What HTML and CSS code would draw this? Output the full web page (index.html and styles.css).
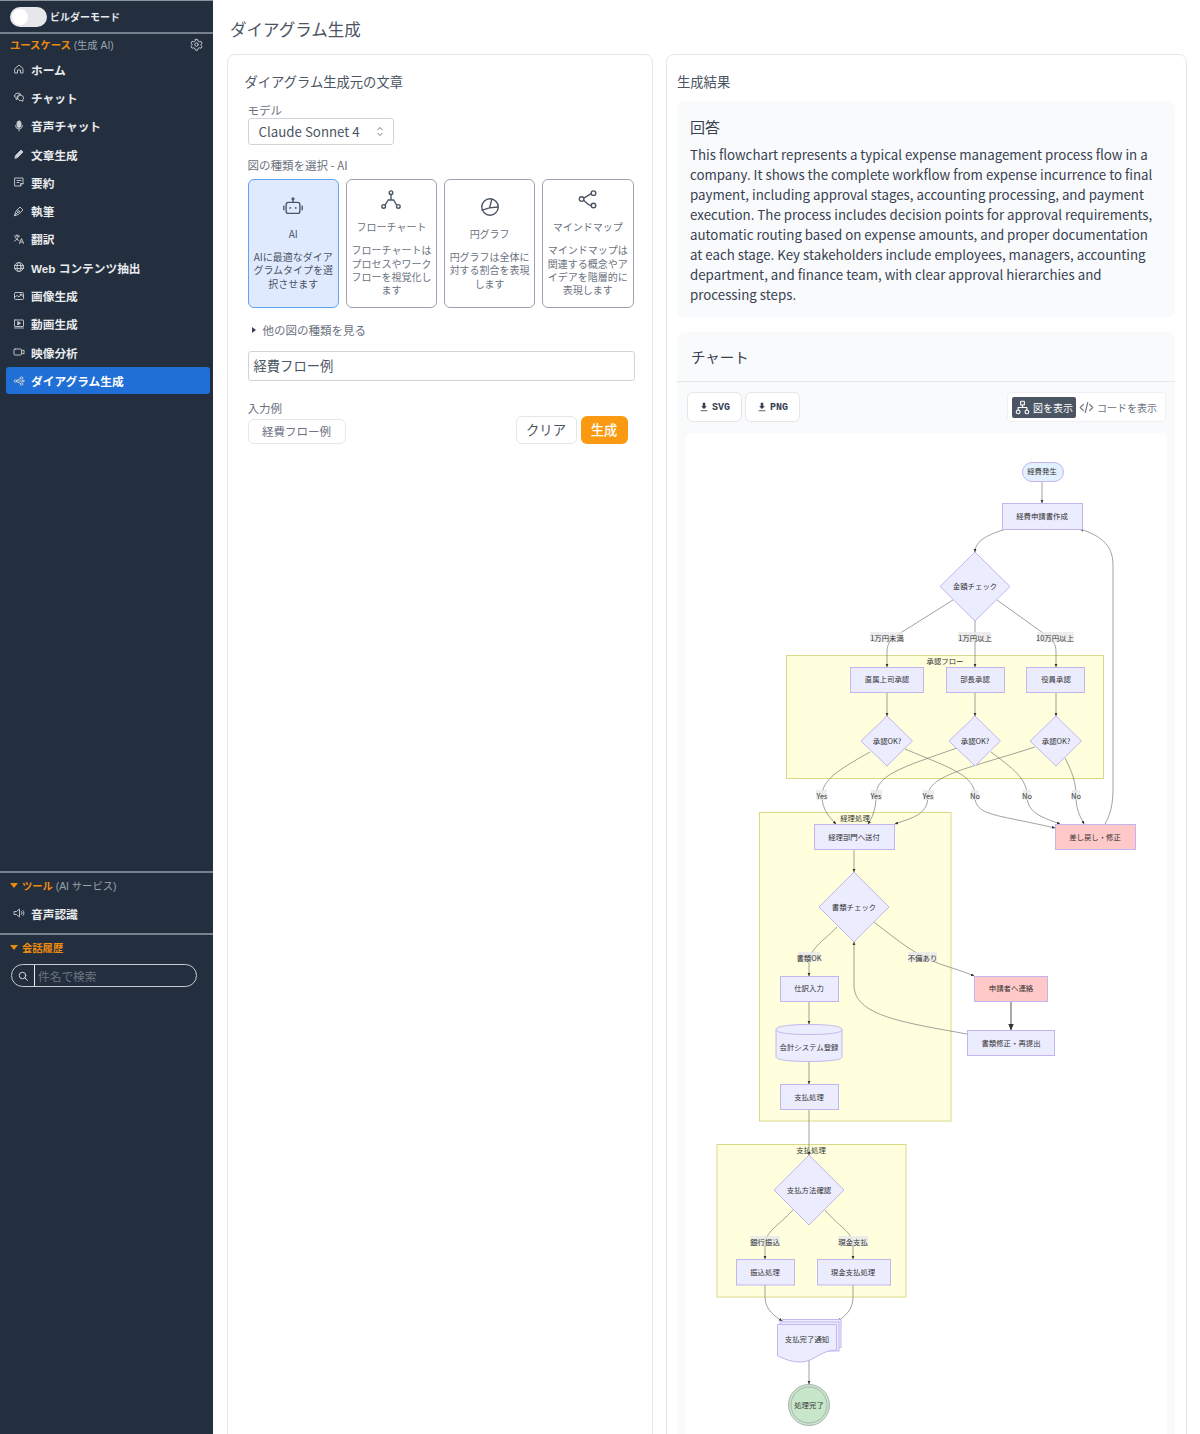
FILE: index.html
```html
<!DOCTYPE html>
<html lang="ja">
<head>
<meta charset="utf-8">
<title>ダイアグラム生成</title>
<link rel="stylesheet" href="styles.css">
</head>
<body>
<div class="app">
  <aside class="sidebar">
    <div class="builder">
      <span class="toggle"><span class="knob"></span></span>
      <span>ビルダーモード</span>
    </div>
    <div class="section-head">
      <span><b class="accent">ユースケース</b> <span class="muted">(生成 AI)</span></span>
      <svg class="gear" viewBox="0 0 24 24"><circle cx="12" cy="12" r="3.2"/><path d="M10 2.5h4l.7 3 2.6 1.5 3-.9 2 3.4-2.2 2.2v1.6l2.2 2.2-2 3.4-3-.9-2.6 1.5-.7 3h-4l-.7-3-2.6-1.5-3 .9-2-3.4 2.2-2.2v-1.6L1.700 9.500l2-3.400 3 .9L9.300 5.500z"/></svg>
    </div>
    <nav class="nav">
      <a class="nav-item"><svg viewBox="0 0 24 24"><path d="M4 11l8-7 8 7v9h-5v-6H9v6H4z"/></svg>ホーム</a>
      <a class="nav-item"><svg viewBox="0 0 24 24"><path d="M3 10a7 6 0 0 1 13-3 7 6 0 0 0-7 9l-3 1 .5-3A6 6 0 0 1 3 10z"/><path d="M9 14a6 5.500 0 0 1 12 0 5 5 0 0 1-1.500 3.500l.5 3-3.500-1.500A6 5.500 0 0 1 9 14z"/></svg>チャット</a>
      <a class="nav-item"><svg viewBox="0 0 24 24"><rect class="fill" x="8" y="2" width="8" height="13" rx="4"/><path d="M5 11a7 7 0 0 0 14 0M12 18v4"/></svg>音声チャット</a>
      <a class="nav-item"><svg viewBox="0 0 24 24"><path class="fill" d="M4 20l1-5L16 4l4 4L9 19z"/></svg>文章生成</a>
      <a class="nav-item"><svg viewBox="0 0 24 24"><path d="M4 4h16v11l-5 5H4z"/><path d="M15 20v-5h5M8 9h8M8 13h4"/></svg>要約</a>
      <a class="nav-item"><svg viewBox="0 0 24 24"><path d="M3 21l3-9 8-8 6 6-8 8z"/><circle cx="11" cy="13" r="2"/><path d="M3 21l6.500-6.500"/></svg>執筆</a>
      <a class="nav-item"><svg viewBox="0 0 24 24"><path d="M3 6h10M8 3v3M11 6c-1 5-4 8-8 10M5 9c1 3 4 5 7 6M13 21l4-10 4 10M14.500 18h5"/></svg>翻訳</a>
      <a class="nav-item"><svg viewBox="0 0 24 24"><circle cx="12" cy="12" r="9"/><ellipse cx="12" cy="12" rx="4" ry="9"/><path d="M3 9h18M3 15h18"/></svg>Web コンテンツ抽出</a>
      <a class="nav-item"><svg viewBox="0 0 24 24"><rect x="3" y="5" width="18" height="14" rx="2"/><path d="M3 15l5-4 4 3 4-5 5 5"/><circle cx="16" cy="9" r="1.500"/></svg>画像生成</a>
      <a class="nav-item"><svg viewBox="0 0 24 24"><rect x="3" y="4" width="18" height="13" rx="1"/><path class="fill" d="M10 7.500l5 3-5 3z"/><path d="M3 20h18"/></svg>動画生成</a>
      <a class="nav-item"><svg viewBox="0 0 24 24"><rect x="2" y="6" width="15" height="12" rx="2"/><path d="M17 10l5-2v8l-5-2"/></svg>映像分析</a>
      <a class="nav-item active"><svg viewBox="0 0 24 24"><circle cx="5" cy="12" r="2.500"/><circle cx="17" cy="6" r="2.500"/><circle cx="17" cy="18" r="2.500"/><circle cx="20" cy="12" r="2"/><path d="M7 11l8-4M7 13l8 4M8 12h10"/></svg>ダイアグラム生成</a>
    </nav>
    <div class="tools">
      <div class="section-head open">
        <span class="caret"></span><span><b class="accent">ツール</b> <span class="muted">(AI サービス)</span></span>
      </div>
      <a class="nav-item"><svg viewBox="0 0 24 24"><path d="M3 9h4l6-5v16l-6-5H3z"/><path d="M17 9a4 4 0 0 1 0 6M20 7a7 7 0 0 1 0 10"/></svg>音声認識</a>
    </div>
    <div class="history">
      <div class="section-head open">
        <span class="caret"></span><b class="accent">会話履歴</b>
      </div>
      <label class="search">
        <svg viewBox="0 0 24 24"><circle cx="11" cy="11" r="6.500"/><path d="M16 16l5 5"/></svg>
        <input class="search-input" type="text" placeholder="件名で検索">
      </label>
    </div>
  </aside>

  <main class="main">
    <h1 class="page-title">ダイアグラム生成</h1>
    <div class="columns">
      <section class="panel panel-left">
        <h2 class="panel-title">ダイアグラム生成元の文章</h2>
        <div class="field">
          <div class="label">モデル</div>
          <div class="select">Claude Sonnet 4
            <svg viewBox="0 0 10 16"><path d="M2 6l3-3 3 3M2 10l3 3 3-3"/></svg>
          </div>
        </div>
        <div class="label type-label">図の種類を選択 - AI</div>
        <div class="cards">
          <div class="card selected">
            <svg class="card-icon" viewBox="0 0 24 24"><rect x="4.500" y="7" width="15" height="12" rx="2.500"/><path d="M12 7V3.500M2 11v4M22 11v4"/><circle cx="12" cy="3" r="1"/><circle class="fill" cx="9" cy="13" r="1"/><circle class="fill" cx="15" cy="13" r="1"/></svg>
            <div class="card-title">AI</div>
            <div class="card-desc">AIに最適なダイアグラムタイプを選択させます</div>
          </div>
          <div class="card">
            <svg class="card-icon" viewBox="0 0 24 24"><circle cx="12" cy="4" r="2"/><circle cx="4" cy="19" r="2"/><circle cx="20" cy="19" r="2"/><path d="M12 6v6M9 12h6l3 5.500M9 12l-3.500 5.500"/></svg>
            <div class="card-title">フローチャート</div>
            <div class="card-desc">フローチャートはプロセスやワークフローを視覚化します</div>
          </div>
          <div class="card">
            <svg class="card-icon" viewBox="0 0 24 24"><circle cx="12" cy="12" r="9"/><path d="M14 3.500L11.500 13 3.500 15.500M11.500 13l9-1"/></svg>
            <div class="card-title">円グラフ</div>
            <div class="card-desc">円グラフは全体に対する割合を表現します</div>
          </div>
          <div class="card">
            <svg class="card-icon" viewBox="0 0 24 24"><circle cx="5" cy="11" r="2.500"/><circle cx="18" cy="4.500" r="2.500"/><circle cx="18" cy="18" r="2.500"/><path d="M7.500 10l8-5M7.500 12.500c3 3 5 5 8 5.500"/></svg>
            <div class="card-title">マインドマップ</div>
            <div class="card-desc">マインドマップは関連する概念やアイデアを階層的に表現します</div>
          </div>
        </div>
        <div class="more"><span class="more-caret"></span>他の図の種類を見る</div>
        <div class="text-input">経費フロー例</div>
        <div class="label example-label">入力例</div>
        <div class="actions">
          <button class="chip" type="button">経費フロー例</button>
          <div class="action-right">
            <button class="btn" type="button">クリア</button>
            <button class="btn primary" type="button">生成</button>
          </div>
        </div>
      </section>

      <section class="panel panel-right">
        <h2 class="result-title">生成結果</h2>
        <div class="answer">
          <h3 class="answer-title">回答</h3>
          <p class="answer-text">This flowchart represents a typical expense management process flow in a company. It shows the complete workflow from expense incurrence to final payment, including approval stages, accounting processing, and payment execution. The process includes decision points for approval requirements, automatic routing based on expense amounts, and proper documentation at each stage. Key stakeholders include employees, managers, accounting department, and finance team, with clear approval hierarchies and processing steps.</p>
        </div>
        <div class="chart">
          <div class="chart-head">チャート</div>
          <div class="chart-tools">
            <button class="dl" type="button"><svg viewBox="0 0 12 12"><path class="fill" d="M4.500 1h3v4h2L6 8.500 2.500 5h2z"/><path d="M2 10.500h8"/></svg>SVG</button>
            <button class="dl" type="button"><svg viewBox="0 0 12 12"><path class="fill" d="M4.500 1h3v4h2L6 8.500 2.500 5h2z"/><path d="M2 10.500h8"/></svg>PNG</button>
            <div class="view-switch">
              <span class="view on"><svg viewBox="0 0 24 24"><rect x="9" y="2" width="6" height="6" rx="1"/><rect x="2" y="16" width="6" height="6" rx="3"/><rect x="16" y="16" width="6" height="6" rx="3"/><path d="M12 8v4M5 16v-4h14v4"/></svg>図を表示</span>
              <span class="view"><svg viewBox="0 0 24 24"><path d="M7 7l-5 5 5 5M17 7l5 5-5 5M14 4l-4 16"/></svg>コードを表示</span>
            </div>
          </div>
          <div class="canvas">
            <svg class="flow" viewBox="686 433 481 1001" width="481" height="1001">
              <defs>
                <marker id="arrow" viewBox="0 0 6 6" refX="5.500" refY="3" markerWidth="5" markerHeight="5" orient="auto"><path class="arrow-head" d="M0 .5L6 3 0 5.500z"/></marker>
              </defs>
              <rect class="group" x="786.500" y="655.500" width="317" height="123"/>
              <rect class="group" x="759.500" y="812.500" width="191.500" height="308.500"/>
              <rect class="group" x="717" y="1144.500" width="189" height="152.500"/>
              <text class="t" x="945" y="661">承認フロー</text>
              <text class="t" x="855" y="818">経理処理</text>
              <text class="t" x="811" y="1150">支払処理</text>

              <g class="edges" marker-end="url(#arrow)">
                <path d="M1042 481V503"/>
                <path d="M1006 529C990 534 975 540 975 552"/>
                <path d="M953 600L902 632C892 638 887 642 887 652V667"/>
                <path d="M975 621V667"/>
                <path d="M997 600L1043 633C1052 640 1056 642 1056 652V667"/>
                <path d="M887 692V716"/>
                <path d="M975 692V716"/>
                <path d="M1056 692V716"/>
                <path d="M870 752C838 770 822 780 822 796C822 810 830 818 836 824"/>
                <path d="M905 749C950 768 975 775 975 796C975 816 995 814 1055 828"/>
                <path d="M957 748C900 768 876 775 876 796C876 810 872 818 868 824"/>
                <path d="M991 752C1012 768 1027 778 1027 796C1027 814 1045 818 1060 824"/>
                <path d="M1035 747C970 768 928 775 928 796C928 816 910 818 895 824"/>
                <path d="M1065 758C1072 772 1076 782 1076 796C1076 810 1080 816 1084 824"/>
                <path d="M1105 824C1110 815 1113 805 1113 790V565C1113 543 1098 535 1080 529"/>
                <path d="M854 849V872"/>
                <path d="M837 927C822 942 809 950 809 962V976"/>
                <path d="M874 922C900 942 915 955 940 964C955 969 965 972 974 976"/>
                <path d="M809 1001V1024"/>
                <path d="M809 1061V1084"/>
                <path d="M809 1109V1155"/>
                <path class="thick" d="M1011 1001V1030"/>
                <path d="M967 1034C900 1022 854 1015 854 985V942"/>
                <path d="M793 1210C778 1226 765 1232 765 1245V1259"/>
                <path d="M825 1210C838 1226 853 1232 853 1245V1259"/>
                <path d="M765 1285V1297C765 1310 775 1316 782 1321"/>
                <path d="M853 1285V1297C853 1310 845 1316 838 1321"/>
                <path d="M809 1360V1384"/>
              </g>

              <rect class="node start" x="1022.500" y="462.500" width="41" height="19" rx="9.500"/>
              <rect class="node" x="1002.500" y="503.500" width="80" height="26"/>
              <polygon class="node" points="975,552 1010,586.500 975,621 940,586.500"/>
              <rect class="node" x="850.500" y="667.500" width="73" height="25"/>
              <rect class="node" x="946.500" y="667.500" width="58" height="25"/>
              <rect class="node" x="1026.500" y="667.500" width="58" height="25"/>
              <polygon class="node" points="887,716 912.500,741 887,766 861,741"/>
              <polygon class="node" points="975,716 1000.500,741 975,766 949,741"/>
              <polygon class="node" points="1056,716 1081.500,741 1056,766 1030,741"/>
              <rect class="node" x="814.500" y="824.500" width="80" height="25"/>
              <rect class="node alert" x="1055.500" y="824.500" width="80" height="25"/>
              <polygon class="node" points="854,872 889,907 854,942 819,907"/>
              <rect class="node" x="780.500" y="976.500" width="58" height="25"/>
              <rect class="node alert" x="974.500" y="976.500" width="73" height="25"/>
              <rect class="node" x="967.500" y="1030.500" width="87" height="25"/>
              <path class="node" d="M776 1029.500C776 1026 790 1024.500 809 1024.500S842 1026 842 1029.500V1057C842 1060 828 1061.500 809 1061.500S776 1060 776 1057Z"/>
              <path class="node open-line" d="M776 1029.500C776 1033 790 1034.500 809 1034.500S842 1033 842 1029.500"/>
              <rect class="node" x="780.500" y="1084.500" width="58" height="25"/>
              <polygon class="node" points="809,1155 844,1190 809,1225 774,1190"/>
              <rect class="node" x="736.500" y="1259.500" width="58" height="25.500"/>
              <rect class="node" x="817.500" y="1259.500" width="73" height="25.500"/>
              <rect class="node" x="782.500" y="1319.500" width="58.500" height="28"/>
              <rect class="node" x="780" y="1322" width="59" height="29"/>
              <path class="node" d="M777.500 1324.500H836.500V1350C820 1350 815 1362 800 1362C790 1362 783 1358 777.500 1356Z"/>
              <circle class="node done" cx="809" cy="1405" r="20.500"/>
              <circle class="node done" cx="809" cy="1405" r="18"/>

              <text class="t" x="1042" y="471">経費発生</text>
              <text class="t" x="1042" y="516">経費申請書作成</text>
              <text class="t" x="975" y="586">金額チェック</text>
              <text class="t" x="887" y="679.500">直属上司承認</text>
              <text class="t" x="975" y="679.500">部長承認</text>
              <text class="t" x="1056" y="679.500">役員承認</text>
              <text class="t" x="887" y="741">承認OK?</text>
              <text class="t" x="975" y="741">承認OK?</text>
              <text class="t" x="1056" y="741">承認OK?</text>
              <text class="t" x="854" y="837">経理部門へ送付</text>
              <text class="t" x="1095" y="837">差し戻し・修正</text>
              <text class="t" x="854" y="907">書類チェック</text>
              <text class="t" x="809" y="988.500">仕訳入力</text>
              <text class="t" x="1011" y="988.500">申請者へ連絡</text>
              <text class="t" x="1011" y="1043">書類修正・再提出</text>
              <text class="t" x="809" y="1047.500">会計システム登録</text>
              <text class="t" x="809" y="1097">支払処理</text>
              <text class="t" x="809" y="1190.500">支払方法確認</text>
              <text class="t" x="765" y="1272">振込処理</text>
              <text class="t" x="853" y="1272">現金支払処理</text>
              <text class="t" x="807" y="1339">支払完了通知</text>
              <text class="t" x="809" y="1405">処理完了</text>

              <rect class="edge-bg" x="870" y="632" width="33" height="10"/>
              <text class="t" x="887" y="638">1万円未満</text>
              <rect class="edge-bg" x="958" y="632" width="33" height="10"/>
              <text class="t" x="975" y="638">1万円以上</text>
              <rect class="edge-bg" x="1037" y="632" width="37" height="10"/>
              <text class="t" x="1055" y="638">10万円以上</text>
              <rect class="edge-bg" x="816" y="790" width="11" height="10"/>
              <text class="t" x="822" y="796">Yes</text>
              <rect class="edge-bg" x="871" y="790" width="11" height="10"/>
              <text class="t" x="876" y="796">Yes</text>
              <rect class="edge-bg" x="923" y="790" width="11" height="10"/>
              <text class="t" x="928" y="796">Yes</text>
              <rect class="edge-bg" x="971" y="790" width="8" height="10"/>
              <text class="t" x="975" y="796">No</text>
              <rect class="edge-bg" x="1023" y="790" width="8" height="10"/>
              <text class="t" x="1027" y="796">No</text>
              <rect class="edge-bg" x="1072" y="790" width="8" height="10"/>
              <text class="t" x="1076" y="796">No</text>
              <rect class="edge-bg" x="798" y="952" width="22" height="10"/>
              <text class="t" x="809" y="958">書類OK</text>
              <rect class="edge-bg" x="908" y="952" width="29" height="10"/>
              <text class="t" x="922.500" y="958">不備あり</text>
              <rect class="edge-bg" x="750" y="1236" width="30" height="10"/>
              <text class="t" x="765" y="1242">銀行振込</text>
              <rect class="edge-bg" x="838" y="1236" width="30" height="10"/>
              <text class="t" x="853" y="1242">現金支払</text>
            </svg>
          </div>
        </div>
      </section>
    </div>
  </main>
</div>
</body>
</html>
```
FILE: styles.css
```css
* { box-sizing: border-box; }
html, body { margin: 0; height: 1434px; overflow: hidden; background: #fff; }
body { font-family: "Noto Sans CJK JP", "Noto Sans", sans-serif; color: #374151; }
h1, h2, h3, p { margin: 0; font-weight: 400; }

.app { display: flex; height: 1434px; }

/* Sidebar */
.sidebar {
  width: 213px; flex: none; height: 100%;
  display: flex; flex-direction: column;
  background: #232f3e; color: #e8eaed;
  font-family: "Liberation Sans", "Noto Sans CJK JP", sans-serif;
  border-top: 1px solid #8a939e;
}
.sidebar svg { fill: none; stroke: currentColor; stroke-width: 2; stroke-linecap: round; stroke-linejoin: round; }
.sidebar svg .fill { fill: currentColor; }
.builder {
  height: 33px; display: flex; align-items: center; gap: 3px;
  padding-left: 10px; font-size: 10px; font-weight: 700;
  border-bottom: 2px solid #77818d;
}
.toggle { width: 37px; height: 20px; border-radius: 10px; background: #e5e7eb; display: flex; align-items: center; padding-left: 2px; }
.knob { width: 16px; height: 16px; border-radius: 50%; background: #fff; }
.section-head {
  height: 21px; display: flex; align-items: center; justify-content: space-between;
  padding: 0 10px; font-size: 10.300px; margin-top: 0;
}
.section-head.open { justify-content: flex-start; gap: 4px; }
.accent { color: #ec8a10; font-weight: 700; }
.muted { color: #9aa3ad; font-weight: 400; }
.gear { width: 13px; height: 13px; stroke-width: 1.800 !important; color: #c4c9d0; margin-right: 0; }
.caret { width: 0; height: 0; border: 4px solid transparent; border-top: 5px solid #ec8a10; border-bottom: 0; }

.nav { flex: 1; display: flex; flex-direction: column; padding: 0 3px 0 6px; gap: 0; }
.nav-item {
  height: 28.300px; flex: none; display: flex; align-items: center; gap: 6px;
  padding-left: 7px; font-size: 11.700px; font-weight: 700; color: #e8eaed; border-radius: 3px;
}
.nav-item svg { width: 12px; height: 12px; flex: none; stroke-width: 1.800; color: #c9ced5; }
.nav-item.active { background: #1f6fd6; color: #fff; height: 27px; margin-top: 1px; }

.tools { border-top: 2px solid #77818d; padding: 2px 0 5px; height: 62px; margin-top: 22px; }
.tools .nav-item { margin: 3px 0 0 6px; }
.history { border-top: 2px solid #77818d; padding-top: 2px; height: 501px; flex: none; }
.search {
  margin: 6px 0 0 11px; width: 186px; height: 23px; display: flex; align-items: center;
  border: 1.500px solid #c6cbd2; border-radius: 12px; padding-left: 5px; color: #d5d9de;
}
.search svg { width: 12px; height: 12px; flex: none; }
.search-input {
  flex: 1; min-width: 0; height: 100%; margin-left: 5px; padding: 0 0 0 3px; border: 0; border-left: 1px solid #e8eaed;
  background: transparent; font: 11.700px "Noto Sans CJK JP", sans-serif; color: #e8eaed; outline: none;
}
.search-input::placeholder { color: #6b7480; opacity: 1; }

/* Main */
.main { flex: 1; min-width: 0; padding: 0 13px 0 14px; overflow: hidden; }
.page-title { font-size: 16.500px; height: 54px; line-height: 58px; padding-left: 3px; color: #4b5563; font-weight: 400; }
.columns { display: grid; grid-template-columns: 426px 521px; gap: 13px; }
.panel { height: 1400px; background: #fff; border: 1px solid #e5e7eb; border-radius: 8px; }
.panel-left { padding: 17.500px 17px 0 19.500px; }
.panel-title { font-size: 13.300px; line-height: 18px; margin-left: -3px; color: #4b5563; font-weight: 400; }
.field { margin-top: 12px; }
.label { font-size: 11.500px; line-height: 14px; color: #6b7280; }
.select {
  margin-top: 1px; width: 146.500px; height: 27px; display: flex; align-items: center; justify-content: space-between;
  padding: 0 9px 0 10px; border: 1px solid #d1d5db; border-radius: 3px; font-size: 13.300px; color: #4b5563;
}
.select svg { width: 8px; height: 13px; fill: none; stroke: #6b7280; stroke-width: 1.200; }
.type-label { margin-top: 13px; }
.cards { margin-top: 7px; display: grid; grid-template-columns: repeat(4, 91.500px); gap: 6.700px; }
.card {
  height: 129px; border: 1px solid #9ca3af; border-radius: 6px; padding: 0 3px;
  display: flex; flex-direction: column; align-items: center; justify-content: center; text-align: center;
  color: #6b7280;
}
.card.selected { background: #dfeaff; border-color: #63a1f2; color: #4b5563; }
.card-icon { width: 22px; height: 22px; fill: none; stroke: #4b5563; stroke-width: 1.500; stroke-linecap: round; stroke-linejoin: round; }
.card-icon .fill { fill: #4b5563; stroke: none; }
.card-title { font-size: 10px; line-height: 14px; margin-top: 9px; }
.card-desc { font-size: 10px; line-height: 13.400px; margin-top: 9px; }
.more { margin-top: 14px; height: 16px; display: flex; align-items: center; font-size: 11.500px; color: #6b7280; padding-left: 4px; }
.more-caret { width: 0; height: 0; margin-right: 7px; border: 3.500px solid transparent; border-left: 4.500px solid #374151; border-right: 0; }
.text-input {
  margin-top: 13px; height: 30px; width: 387.500px; display: flex; align-items: center; padding-left: 5px;
  border: 1px solid #d1d5db; border-radius: 3px; font-size: 13.300px; color: #4b5563;
}
.example-label { margin-top: 20px; }
.actions { display: flex; align-items: flex-end; margin-top: 4px; width: 380px; justify-content: space-between; }
button { font-family: inherit; cursor: pointer; background: #fff; }
.chip { width: 98px; height: 25px; border: 1px solid #e5e7eb; border-radius: 6px; font-size: 11.500px; color: #6b7280; padding: 0; }
.action-right { display: flex; gap: 4px; margin-top: -3px; }
.btn { height: 28px; width: 61px; border: 1px solid #e5e7eb; border-radius: 6px; font-size: 13.300px; color: #4b5563; padding: 0; }
.btn.primary { width: 47px; background: #fa9a12; border: 0; color: #fff; font-weight: 500; }

.panel-right { padding: 18px 11px 0 10px; }
.result-title { font-size: 13.300px; line-height: 18px; color: #4b5563; font-weight: 400; }
.answer { margin-top: 10px; height: 217px; background: #f9fafb; border-radius: 8px; padding: 14px 13px; }
.answer-title { font-size: 15px; line-height: 24px; color: #374151; font-weight: 400; }
.answer-text { margin-top: 6px; font-size: 13.300px; line-height: 20px; color: #374151; }
.chart { margin-top: 14px; height: 1110px; background: #f9fafb; border-radius: 8px; }
.chart-head { height: 50px; line-height: 50px; padding-left: 14px; font-size: 14.500px; border-bottom: 1px solid #e5e7eb; color: #374151; }
.chart-tools { display: flex; align-items: center; gap: 3px; padding: 10px 9px 0 10px; }
.dl {
  height: 30px; width: 55px; display: flex; align-items: center; justify-content: center; gap: 3px;
  border: 1px solid #e5e7eb; border-radius: 6px; font: 700 10px "Liberation Mono", monospace; color: #374151; padding: 0;
}
.dl svg { width: 10px; height: 10px; fill: none; stroke: #374151; stroke-width: 1; }
.dl svg .fill { fill: #374151; stroke: none; }
.view-switch {
  margin-left: auto; height: 30px; width: 159px; display: flex; align-items: center; padding: 0 4px;
  background: #fff; border: 1px solid #eef0f3; border-radius: 4px; font-size: 10px; color: #6b7280;
}
.view { display: flex; align-items: center; gap: 3px; height: 21px; padding: 0 3px; border-radius: 2px; white-space: nowrap; }
.view svg { width: 15px; height: 15px; fill: none; stroke: currentColor; stroke-width: 1.800; stroke-linecap: round; stroke-linejoin: round; flex: none; }
.view.on { background: #4b5563; color: #fff; }
.canvas { margin: 11px 8px 0 9px; background: #fff; border-radius: 6px; height: 1010px; overflow: hidden; }
.flow { display: block; }

/* Diagram */
.group { fill: #ffffde; stroke: #d9d98a; stroke-width: 1; }
.node { fill: #ececff; stroke: #c4b5ee; stroke-width: 1; }
.node.start { fill: #e3f0ff; }
.node.alert { fill: #ffc9c9; }
.node.done { fill: #c8e6c9; stroke: #a9b6b0; }
.node.open-line { fill: none; }
.edges { fill: none; stroke: #7a7a7a; stroke-width: .7; }
.edges .thick { stroke-width: 1.300; }
.arrow-head { fill: #333; }
.edge-bg { fill: #e8e8e8; opacity: .8; }
.t { font-size: 7.400px; fill: #333; text-anchor: middle; dominant-baseline: central; font-family: "Noto Sans CJK JP", sans-serif; transform: translateY(-1px); }
```
